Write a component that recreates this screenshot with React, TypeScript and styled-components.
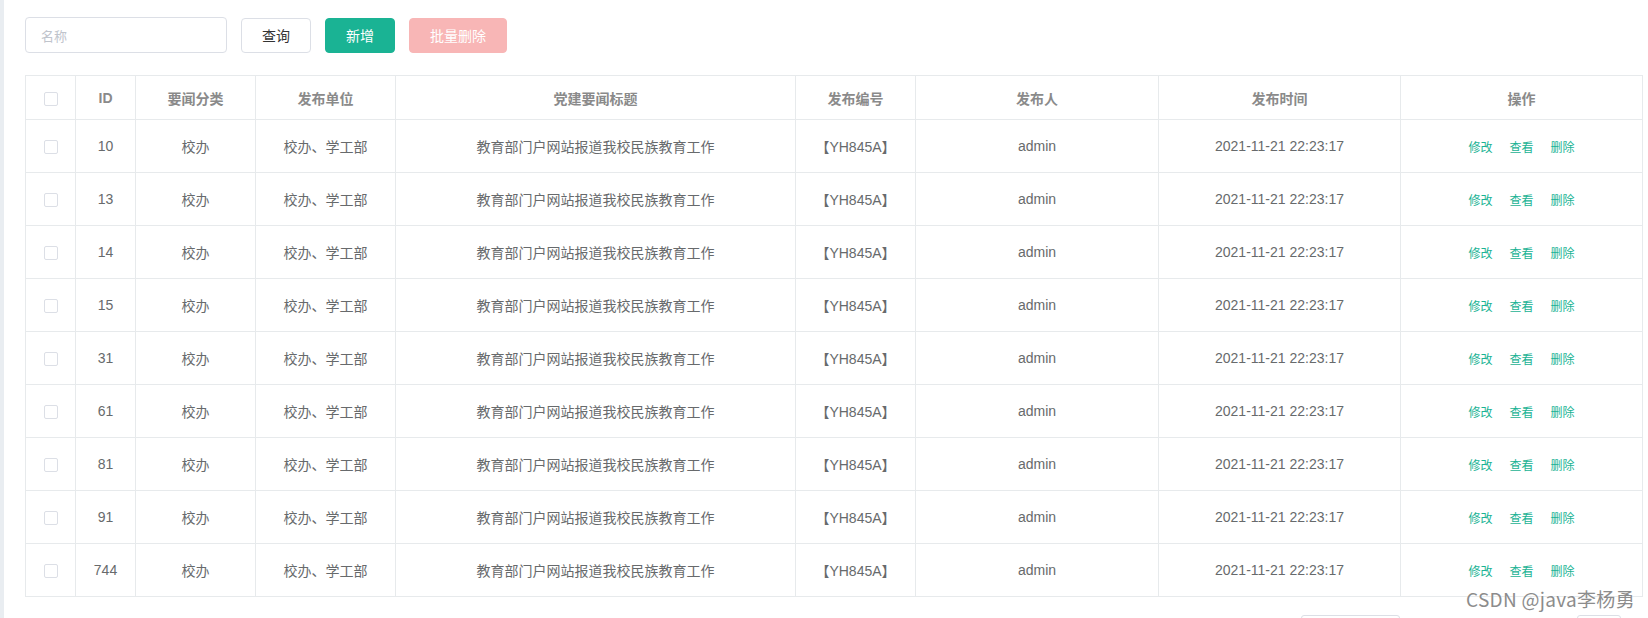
import styled, { createGlobalStyle } from 'styled-components';

const GlobalStyle = createGlobalStyle`
  html, body {
    margin: 0;
    padding: 0;
    background: #fff;
    font-family: "Liberation Sans", "Noto Sans CJK SC", sans-serif;
    font-size: 14px;
    color: #676a6c;
  }
`;

type Row = { id: number };

const rows: Row[] = [10, 13, 14, 15, 31, 61, 81, 91, 744].map((id) => ({ id }));

const columns = [
  { key: 'check', width: 50 },
  { key: 'id', width: 60, title: 'ID' },
  { key: 'cat', width: 120, title: '要闻分类' },
  { key: 'unit', width: 140, title: '发布单位' },
  { key: 'title', width: 400, title: '党建要闻标题' },
  { key: 'no', width: 120, title: '发布编号' },
  { key: 'user', width: 243, title: '发布人' },
  { key: 'time', width: 242, title: '发布时间' },
  { key: 'ops', width: 242, title: '操作' },
];

export default function App() {
  return (
    <>
      <GlobalStyle />
      <SPage>
        <SStrip />
        <SMain>
          <SToolbar>
            <SInput placeholder="名称" />
            <SButton $w={70}>查询</SButton>
            <SButton $w={70} $variant="primary">
              新增
            </SButton>
            <SButton $w={98} $variant="danger">
              批量删除
            </SButton>
          </SToolbar>

          <STable>
            <colgroup>
              {columns.map((c) => (
                <col key={c.key} style={{ width: c.width }} />
              ))}
            </colgroup>
            <thead>
              <tr>
                {columns.map((c) => (
                  <STh key={c.key}>{c.key === 'check' ? <SCheck /> : c.title}</STh>
                ))}
              </tr>
            </thead>
            <tbody>
              {rows.map((r) => (
                <tr key={r.id}>
                  <STd>
                    <SCheck />
                  </STd>
                  <STd>{r.id}</STd>
                  <STd>校办</STd>
                  <STd>校办、学工部</STd>
                  <STd>教育部门户网站报道我校民族教育工作</STd>
                  <STd>【YH845A】</STd>
                  <STd>admin</STd>
                  <STd>2021-11-21 22:23:17</STd>
                  <STd>
                    <SActions>
                      <SLink>修改</SLink>
                      <SLink>查看</SLink>
                      <SLink>删除</SLink>
                    </SActions>
                  </STd>
                </tr>
              ))}
            </tbody>
          </STable>

          <SPager>
            <SPagerBox $w={99} />
            <SPagerBox $w={44} />
          </SPager>
        </SMain>
        <SWatermark>CSDN @java李杨勇</SWatermark>
      </SPage>
    </>
  );
}

const SPage = styled.div`
  position: relative;
  display: flex;
  height: 618px;
  overflow: hidden;
`;

const SStrip = styled.div`
  width: 4px;
  flex: none;
  background: #e9edf1;
`;

const SMain = styled.div`
  flex: 1;
  padding: 17px 6px 0 21px;
`;

const SToolbar = styled.div`
  display: flex;
  align-items: center;
  gap: 14px;
  height: 36px;
  margin-bottom: 22px;
`;

const SInput = styled.input`
  box-sizing: border-box;
  width: 202px;
  height: 36px;
  padding: 0 15px;
  border: 1px solid #dcdfe6;
  border-radius: 4px;
  font-family: "Noto Sans CJK SC", sans-serif;
  font-size: 13px;
  outline: none;
  &::placeholder {
    color: #c0c4cc;
  }
`;

const SButton = styled.button<{ $w: number; $variant?: 'primary' | 'danger' }>`
  box-sizing: border-box;
  width: ${(p) => p.$w}px;
  height: 35px;
  padding: 0;
  border-radius: 4px;
  font-family: "Noto Sans CJK SC", sans-serif;
  font-size: 14px;
  border: 1px solid
    ${(p) => (p.$variant === 'primary' ? '#1ab394' : p.$variant === 'danger' ? '#f8b6b6' : '#dcdfe6')};
  background: ${(p) => (p.$variant === 'primary' ? '#1ab394' : p.$variant === 'danger' ? '#f8b6b6' : '#fff')};
  color: ${(p) => (p.$variant ? '#fff' : '#333')};
`;

const STable = styled.table`
  width: 1617px;
  table-layout: fixed;
  border-collapse: collapse;
  border: 1px solid #e7eaec;
`;

const STh = styled.th`
  height: 43px;
  padding: 0;
  border: 1px solid #e7eaec;
  text-align: center;
  vertical-align: middle;
  font-family: "Liberation Sans", "Noto Sans CJK SC", sans-serif;
  font-size: 14px;
  font-weight: 600;
  color: #8a8a8a;
`;

const STd = styled.td`
  height: 52px;
  padding: 0;
  border: 1px solid #e7eaec;
  text-align: center;
  vertical-align: middle;
  font-size: 14px;
  color: #676a6c;
  white-space: nowrap;
`;

const SCheck = styled.span`
  display: inline-block;
  box-sizing: border-box;
  width: 14px;
  height: 14px;
  border: 1px solid #dcdfe6;
  border-radius: 2px;
  vertical-align: middle;
`;

const SActions = styled.div`
  display: flex;
  justify-content: center;
  gap: 17px;
`;

const SLink = styled.a`
  font-family: "Noto Sans CJK SC", sans-serif;
  font-size: 12px;
  color: #1ab394;
  cursor: pointer;
`;

const SPager = styled.div`
  display: flex;
  justify-content: flex-end;
  gap: 177px;
  margin-top: 18px;
  padding-right: 22px;
`;

const SPagerBox = styled.div<{ $w: number }>`
  width: ${(p) => p.$w}px;
  height: 30px;
  border: 1px solid #dcdfe6;
  border-radius: 3px;
  box-sizing: border-box;
`;

const SWatermark = styled.div`
  position: absolute;
  left: 1466px;
  top: 585px;
  font-family: "Noto Sans CJK SC", sans-serif;
  font-size: 19px;
  color: #8c8c8c;
  letter-spacing: 0.3px;
  text-shadow: 0 0 2px #fff;
`;
